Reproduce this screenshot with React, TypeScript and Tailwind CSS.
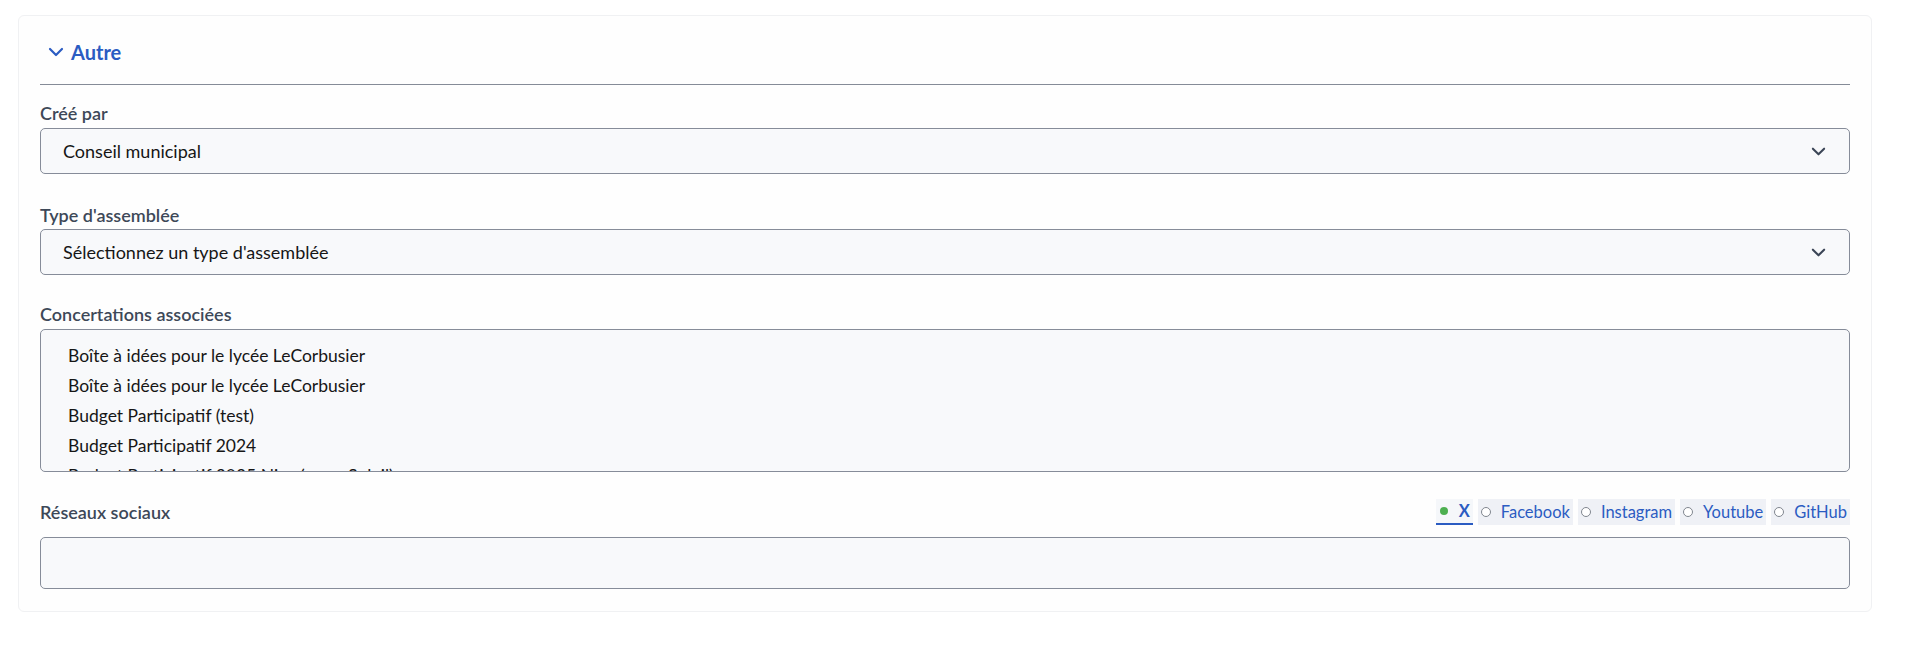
import React from 'react'

const concertations = [
    'Boîte à idées pour le lycée LeCorbusier',
    'Boîte à idées pour le lycée LeCorbusier',
    'Budget Participatif (test)',
    'Budget Participatif 2024',
    'Budget Participatif 2025 Nice (cœur Soleil)',
]

const networks = ['X', 'Facebook', 'Instagram', 'Youtube', 'GitHub']

const Chevron = ({ className = '' }: { className?: string }) => (
    <svg
        viewBox="0 0 16 16"
        className={className}
        fill="none"
        stroke="currentColor"
        strokeWidth={2.2}
        strokeLinecap="round"
        strokeLinejoin="round"
    >
        <path d="M2 5l6 6 6-6" />
    </svg>
)

const Label = ({ children }: { children: React.ReactNode }) => (
    <div className="text-[18px] leading-[24px] font-semibold text-[#3d4858]">
        {children}
    </div>
)

const Select = ({ value }: { value: string }) => (
    <div className="flex h-[46px] items-center justify-between rounded-[5px] border border-[#868c99] bg-[#f8f9fb] pl-[22px] pr-[23px]">
        <span className="text-[18px] text-[#161616]">{value}</span>
        <Chevron className="h-[15px] w-[15px] text-[#3b4556]" />
    </div>
)

export default function App() {
    return (
        <div className="min-h-[664px] bg-white pt-[15px] font-['Lato',sans-serif]">
            <div className="ml-[18px] mr-[46px] rounded-[6px] border border-[#f0f1f3] bg-[#fefefe] px-[21px] pt-[22px] pb-[22px]">
                <div className="flex items-center gap-[7px] border-b-[1.5px] border-[#858b97] pb-[18px] pl-[8px]">
                    <Chevron className="h-[16px] w-[16px] text-[#2b5cc2]" />
                    <span className="text-[20px] leading-[28px] font-bold text-[#2b5cc2]">
                        Autre
                    </span>
                </div>

                <div className="mt-[16px]">
                    <Label>Créé par</Label>
                    <div className="mt-[3px]">
                        <Select value="Conseil municipal" />
                    </div>
                </div>

                <div className="mt-[29px]">
                    <Label>Type d'assemblée</Label>
                    <div className="mt-[2px]">
                        <Select value="Sélectionnez un type d'assemblée" />
                    </div>
                </div>

                <div className="mt-[27px]">
                    <Label>Concertations associées</Label>
                    <div className="mt-[3px] h-[143px] overflow-hidden rounded-[5px] border border-[#868c99] bg-[#f8f9fb] pt-[11px] pl-[27px]">
                        {concertations.map((c, i) => (
                            <div
                                key={i}
                                className="text-[17.5px] leading-[30px] text-[#161616]"
                            >
                                {c}
                            </div>
                        ))}
                    </div>
                </div>

                <div className="mt-[27px]">
                    <div className="flex items-center justify-between">
                        <Label>Réseaux sociaux</Label>
                        <div className="flex gap-[5px]">
                            {networks.map((n, i) => (
                                <div
                                    key={n}
                                    className={`flex h-[26px] items-center px-[3px] text-[16.5px] text-[#2b5cc2] ${
                                        i === 0
                                            ? 'gap-[11px] border-b-2 border-[#2b5cc2] bg-[#f5f7fa] pl-[4px] font-bold'
                                            : 'gap-[10px] bg-[#eff1f6]'
                                    }`}
                                >
                                    {i === 0 ? (
                                        <span className="h-[8px] w-[8px] rounded-full bg-[#4caf50]" />
                                    ) : (
                                        <span className="h-[10px] w-[10px] rounded-full border border-[#80868f] bg-white" />
                                    )}
                                    <span>{n}</span>
                                </div>
                            ))}
                        </div>
                    </div>
                    <div className="mt-[12px] h-[52px] rounded-[5px] border border-[#868c99] bg-[#f8f9fb]" />
                </div>
            </div>
        </div>
    )
}
